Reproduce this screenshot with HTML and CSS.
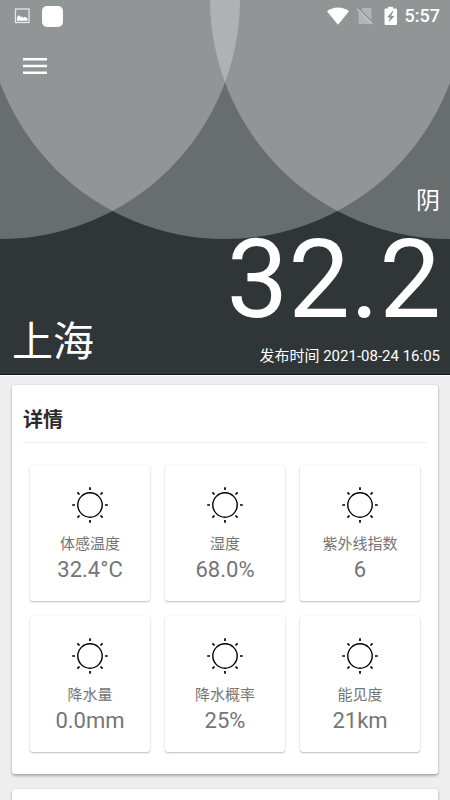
FILE: index.html
```html
<!DOCTYPE html>
<html lang="zh-CN">
<head>
<meta charset="utf-8">
<meta name="viewport" content="width=device-width, initial-scale=1">
<title>上海</title>
<link rel="stylesheet" href="styles.css">
</head>
<body>
<svg class="defs" aria-hidden="true">
  <symbol id="sun" viewBox="0 0 40 40">
    <circle cx="20" cy="20" r="12.2" fill="none" stroke="#000" stroke-width="1.400"/>
    <path fill="none" stroke="#000" stroke-width="1.700" d="M20 2.200v2.800M20 35v2.800M2.200 20h2.800M35 20h2.800M7.400 7.400l2.100 2.100M30.500 30.500l2.100 2.100M7.400 32.600l2.100-2.100M30.500 9.500l2.100-2.100"/>
  </symbol>
</svg>
<header class="hero">
  <svg class="hero-art" viewBox="0 0 450 375" preserveAspectRatio="xMidYMin slice" aria-hidden="true">
    <g fill="#fff" fill-opacity=".275">
      <circle cx="0" cy="-1" r="240"/>
      <circle cx="225" cy="-1" r="240"/>
      <circle cx="450" cy="-1" r="240"/>
    </g>
  </svg>
  <div class="status">
    <svg width="16" height="16" viewBox="0 0 16 16" aria-hidden="true">
      <rect x="1.500" y="1" width="13.500" height="13.500" fill="none" stroke="#e6e7e7" stroke-width="1.300"/>
      <path fill="#fff" d="M3 12.800V9.300l2-2.200 1.600 1.800 1.200-.4 1.700 1.300 1.600-1 2.400 1.800v2.200z"/>
    </svg>
    <span class="status-app"></span>
    <div class="status-right">
      <svg width="22" height="18" viewBox="0 0 22 18" aria-hidden="true">
        <path fill="#fff" d="M0 4.200Q5 .5 11 .5T22 4.200L11 17.800z"/>
      </svg>
      <svg class="no-sim" width="18" height="18" viewBox="0 0 18 18" aria-hidden="true">
        <path fill="#fff" fill-opacity=".3" d="M6.800 1H14q1.500 0 1.500 1.500v13q0 1.500-1.500 1.500H4q-1.500 0-1.500-1.500V5.300z"/>
        <path stroke="#909494" stroke-width="1.400" d="M2 .8l15.500 15.500"/>
        <path stroke="#c2c4c4" stroke-width="1.400" d="M1 1.800l15.500 15.500"/>
      </svg>
      <svg class="battery" width="14" height="20" viewBox="0 0 14 20" aria-hidden="true">
        <path fill="#fff" fill-rule="evenodd" d="M4 2.500V.8h5v1.700h3q1 0 1 1v14.500q0 1-1 1H1.500q-1 0-1-1V3.500q0-1 1-1zM8.600 5L3 11.500h3L4.500 16.500 10.500 10H7.300L9.400 5z"/>
      </svg>
      <time class="clock">5:57</time>
    </div>
  </div>
  <button class="menu" type="button" aria-label="菜单">
    <svg width="24" height="16" viewBox="0 0 24 16" aria-hidden="true">
      <path stroke="#fff" stroke-width="2.400" d="M0 1.200h24M0 8h24M0 14.800h24"/>
    </svg>
  </button>
  <div class="condition">阴</div>
  <div class="temperature">32.2</div>
  <div class="place">
    <h1 class="city">上海</h1>
    <p class="published">发布时间 2021-08-24 16:05</p>
  </div>
</header>
<main class="content">
  <section class="card">
    <h2 class="card-title">详情</h2>
    <div class="grid">
      <article class="tile"><svg class="sun" aria-hidden="true"><use href="#sun"/></svg><span class="label">体感温度</span><span class="value">32.4°C</span></article>
      <article class="tile"><svg class="sun" aria-hidden="true"><use href="#sun"/></svg><span class="label">湿度</span><span class="value">68.0%</span></article>
      <article class="tile"><svg class="sun" aria-hidden="true"><use href="#sun"/></svg><span class="label">紫外线指数</span><span class="value">6</span></article>
      <article class="tile"><svg class="sun" aria-hidden="true"><use href="#sun"/></svg><span class="label">降水量</span><span class="value">0.0mm</span></article>
      <article class="tile"><svg class="sun" aria-hidden="true"><use href="#sun"/></svg><span class="label">降水概率</span><span class="value">25%</span></article>
      <article class="tile"><svg class="sun" aria-hidden="true"><use href="#sun"/></svg><span class="label">能见度</span><span class="value">21km</span></article>
    </div>
  </section>
  <section class="card"></section>
</main>
</body>
</html>
```
FILE: styles.css
```css
* {
  box-sizing: border-box;
}

html {
  height: 100%;
}

body {
  margin: 0;
  height: 100%;
  overflow: hidden;
  background: #eee;
  color: #757575;
  font-family: Roboto, "Noto Sans CJK SC", sans-serif;
}

.defs {
  position: absolute;
  width: 0;
  height: 0;
}

.hero {
  position: relative;
  display: flex;
  flex-direction: column;
  padding-bottom: 8px;
  background: #303638;
  border-bottom: 1px solid #15191b;
  box-shadow: 0 1px 0 #fff;
  color: #fff;
  isolation: isolate;
}

.hero-art {
  position: absolute;
  inset: 0;
  z-index: -1;
  width: 100%;
  height: 100%;
}

.status {
  display: flex;
  align-items: center;
  height: 32px;
  padding: 0 10px 0 14px;
}

.status svg {
  flex: none;
}

.status-app {
  width: 21px;
  height: 21px;
  margin-left: 12px;
  border-radius: 5px;
  background: #fff;
}

.status-right {
  display: flex;
  align-items: center;
  margin-left: auto;
}

.no-sim {
  margin-left: 7px;
}

.battery {
  margin-left: 10px;
}

.clock {
  margin-left: 7px;
  font-size: 18px;
  line-height: 20px;
  font-weight: 500;
}

.menu {
  align-self: flex-start;
  display: flex;
  margin: 18px 0 0 15px;
  padding: 8px;
  border: 0;
  background: none;
}

.condition {
  margin-top: 101px;
  padding-right: 10px;
  font-size: 24px;
  line-height: 36px;
  text-align: right;
}

.temperature {
  padding-right: 9px;
  font-size: 110px;
  line-height: 122px;
  text-align: right;
}

.place {
  display: flex;
  align-items: flex-end;
  justify-content: space-between;
  padding: 0 10px 0 12px;
  margin-top: -23px;
}

.city {
  margin: 0;
  font-size: 41px;
  line-height: 48px;
  font-weight: 400;
}

.published {
  margin: 0;
  font-size: 15px;
  line-height: 20px;
}

.content {
  display: flex;
  flex-direction: column;
  gap: 15px;
  padding: 10px 12px 0;
}

.card {
  min-height: 60px;
  padding: 16px 11px 22px;
  border-radius: 3px;
  background: #fff;
  box-shadow: 0 2px 3px rgba(0, 0, 0, .28), 0 0 2px rgba(0, 0, 0, .12);
}

.card-title {
  margin: 0;
  padding-bottom: 3px;
  border-bottom: 1px solid #eee;
  color: #2b2b2b;
  font-size: 20px;
  line-height: 38px;
  font-weight: 700;
}

.grid {
  display: grid;
  grid-template-columns: repeat(3, 1fr);
  gap: 15px;
  padding: 22px 7px 0;
}

.tile {
  display: flex;
  flex-direction: column;
  align-items: center;
  padding: 20px 0 17px;
  border-radius: 3px;
  box-shadow: 0 1px 2px rgba(0, 0, 0, .26), 0 0 1px rgba(0, 0, 0, .1);
}

.sun {
  width: 40px;
  height: 40px;
}

.label {
  margin-top: 7px;
  font-size: 15px;
  line-height: 24px;
}

.value {
  font-size: 22px;
  line-height: 28px;
}
```
